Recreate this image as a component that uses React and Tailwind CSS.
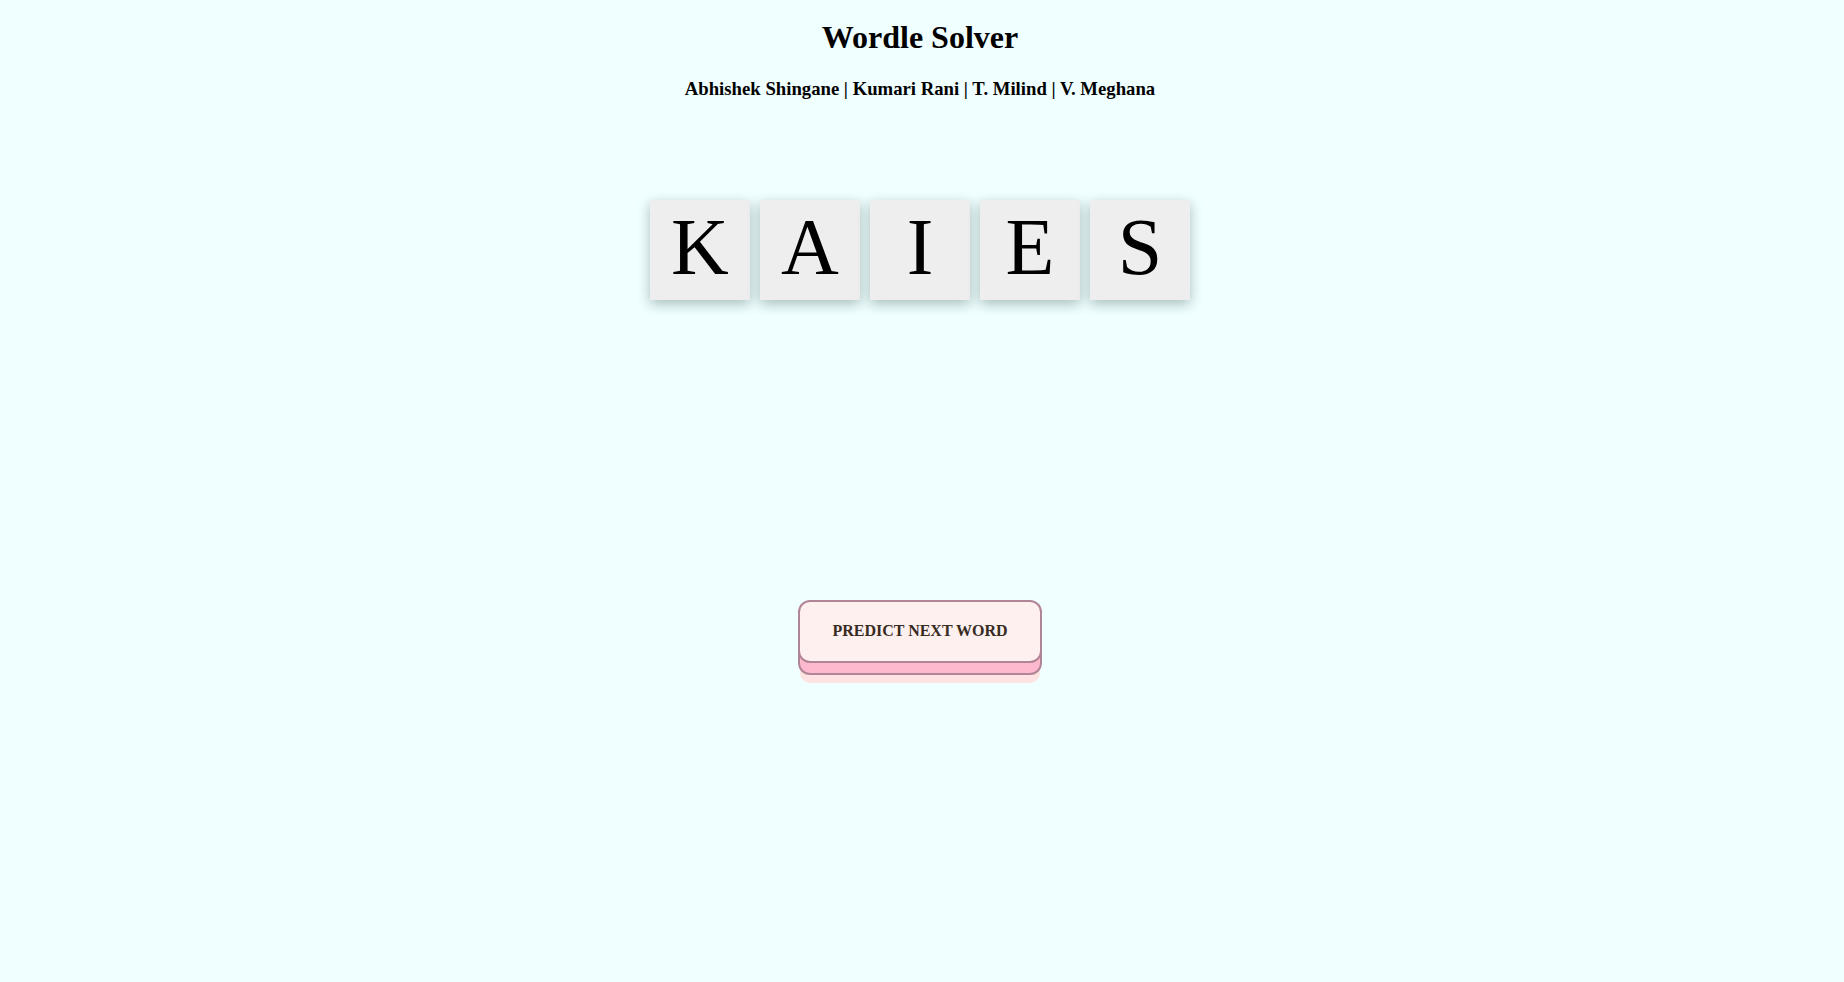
import { useState } from 'react'

const letters = ['K', 'A', 'I', 'E', 'S']

function Tile({ letter }) {
  return (
    <div className="mx-[5px] flex h-[100px] w-[100px] items-center justify-center bg-[#eeeeee] pb-[6px] text-[80px] leading-none text-black shadow-[0_4px_12px_rgba(0,40,40,0.3)]">
      {letter}
    </div>
  )
}

export default function App() {
  const [word] = useState(letters)

  return (
    <div
      className="flex min-h-[982px] w-full flex-col items-center bg-[#f0ffff] pr-[4px] text-black"
      style={{ fontFamily: '"Liberation Serif", "Times New Roman", serif' }}
    >
      <h1 className="mt-[19px] text-[32px] font-bold leading-[1.149]">Wordle Solver</h1>
      <h3 className="mt-[22px] text-[18.72px] font-bold leading-[1.149]">
        Abhishek Shingane | Kumari Rani | T. Milind | V. Meghana
      </h3>

      <div className="mt-[101px] flex">
        {word.map((letter, index) => (
          <Tile key={index} letter={letter} />
        ))}
      </div>

      <div className="relative mt-[300px]">
        <span className="absolute inset-[2px] translate-y-[12px] rounded-[10px] bg-[#ffb9cf] shadow-[0_0_0_2px_#b18597,0_10px_0_0_#ffe3e2]" />
        <button
          type="button"
          className="relative rounded-[12px] border-2 border-[#b18597] bg-[#fff0f0] px-[32px] py-[20px] text-[16px] font-bold uppercase leading-[1.149] text-[#382b22]"
        >
          Predict next word
        </button>
      </div>
    </div>
  )
}
